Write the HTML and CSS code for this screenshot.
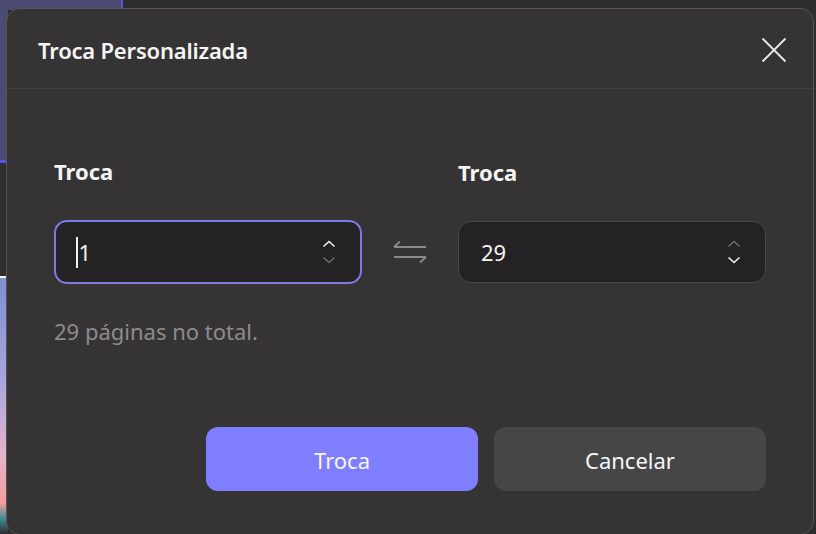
FILE: index.html
```html
<!DOCTYPE html>
<html lang="pt">
<head>
  <meta charset="UTF-8">
  <meta name="viewport" content="width=device-width, initial-scale=1.0">
  <title>Troca Personalizada</title>
  <link rel="stylesheet" href="styles.css">
</head>
<body>
  <!-- App behind the modal -->
  <div class="backdrop">
    <div class="backdrop-top">
      <div class="tab-active"></div>
      <div class="tab-rest"></div>
    </div>
    <div class="backdrop-side">
      <div class="side-top"></div>
      <div class="side-line"></div>
      <div class="side-dark"></div>
      <div class="side-thumb"></div>
    </div>
  </div>

  <!-- Dialog -->
  <div class="dialog">
    <div class="dialog-header">
      <h2>Troca Personalizada</h2>
      <button class="close" aria-label="Fechar">
        <svg width="26" height="26" viewBox="0 0 26 26">
          <path d="M1.5 1.5 L24.5 24.5 M24.5 1.5 L1.5 24.5" stroke="#ececec" stroke-width="1.8" fill="none"/>
        </svg>
      </button>
    </div>

    <div class="dialog-body">
      <div class="fields">
        <div class="field">
          <label>Troca</label>
          <div class="spin focused">
            <span class="value"><span class="caret"></span>1</span>
            <span class="arrows">
              <svg width="14" height="26" viewBox="0 0 14 26">
                <path d="M1.5 7.5 L7 2.5 L12.5 7.5" stroke="#f2f2f2" stroke-width="1.6" fill="none"/>
                <path d="M1.5 18.5 L7 23.5 L12.5 18.5" stroke="#6a6869" stroke-width="1.6" fill="none"/>
              </svg>
            </span>
          </div>
        </div>

        <div class="swap">
          <svg width="36" height="24" viewBox="0 0 36 24">
            <path d="M2 7 H34 M2 7 L8 1.5 M34 17 H2 M34 17 L28 22.5" stroke="#8b898a" stroke-width="1.8" fill="none"/>
          </svg>
        </div>

        <div class="field">
          <label>Troca</label>
          <div class="spin">
            <span class="value">29</span>
            <span class="arrows">
              <svg width="14" height="26" viewBox="0 0 14 26">
                <path d="M1.5 7.5 L7 2.5 L12.5 7.5" stroke="#6a6869" stroke-width="1.6" fill="none"/>
                <path d="M1.5 18.5 L7 23.5 L12.5 18.5" stroke="#f2f2f2" stroke-width="1.6" fill="none"/>
              </svg>
            </span>
          </div>
        </div>
      </div>

      <p class="note">29 páginas no total.</p>

      <div class="actions">
        <button class="btn primary">Troca</button>
        <button class="btn">Cancelar</button>
      </div>
    </div>
  </div>
</body>
</html>
```

FILE: styles.css
```css
html, body {
  margin: 0;
  height: 100%;
}
body {
  font-family: "Noto Sans", "Open Sans", sans-serif;
  background: #2e2d2e;
  overflow: hidden;
  position: relative;
}

/* app behind the modal */
.backdrop {
  height: 100%;
  display: flex;
  flex-direction: column;
}
.backdrop-top {
  display: flex;
  height: 10px;
}
.tab-active {
  width: 121px;
  background: #4b4a72;
  border-right: 2px solid #5a55e6;
}
.tab-rest {
  flex: 1;
  background: #2e2d2e;
}
.backdrop-side {
  width: 8px;
  flex: 1;
  display: flex;
  flex-direction: column;
}
.side-top {
  height: 150px;
  background: #4b4a72;
}
.side-line {
  height: 3px;
  background: #5a55e6;
}
.side-dark {
  height: 113px;
  background: #2f2e2f;
  border-bottom: 2px solid #f4f4f4;
}
.side-thumb {
  flex: 1;
  background: linear-gradient(#7f8fd2, #a7a6dd 40%, #e7b4cc 70%, #f39c9c 88%, #3f8c95 94%, #2e2d2e);
}

/* dialog */
.dialog {
  position: absolute;
  left: 6px;
  top: 8px;
  width: 806px;
  height: 525px;
  background: #353334;
  border: 1px solid #555354;
  border-radius: 14px;
  color: #f4f4f4;
  overflow: hidden;
}
.dialog-header {
  height: 80px;
  display: flex;
  align-items: center;
  justify-content: space-between;
  padding: 2px 26px 0 31px;
  box-sizing: border-box;
  border-bottom: 1px solid #414041;
}
.dialog-header h2 {
  margin: 0;
  font-size: 22px;
  font-weight: 600;
  letter-spacing: -0.2px;
}
.close {
  background: none;
  border: none;
  padding: 0;
  width: 26px;
  height: 26px;
  cursor: pointer;
}

.dialog-body {
  padding: 0 47px 0 47px;
}
.fields {
  display: flex;
  align-items: flex-end;
  margin-top: 67px;
}
.field {
  width: 308px;
  display: flex;
  flex-direction: column;
}
.field label {
  font-size: 22px;
  font-weight: 700;
  line-height: 30px;
  margin-bottom: 34px;
}
.spin {
  height: 62px;
  box-sizing: border-box;
  border: 1px solid #4a4849;
  border-radius: 13px;
  background: #242224;
  display: flex;
  align-items: center;
  justify-content: space-between;
  padding: 0 24px 0 22px;
  font-size: 22px;
}
.spin.focused {
  height: 64px;
  border: 2px solid #7c7ce0;
  margin-bottom: -1px;
  padding-left: 20px;
}
.value {
  display: flex;
  align-items: center;
}
.caret {
  width: 1.5px;
  height: 31px;
  background: #f0f0f0;
  margin-right: 1px;
}
.arrows {
  display: flex;
}
.swap {
  flex: 1;
  height: 62px;
  display: flex;
  align-items: center;
  justify-content: center;
}

.note {
  margin: 32px 0 0;
  font-size: 22px;
  line-height: 32px;
  color: #8d8b8c;
}

.actions {
  display: flex;
  justify-content: flex-end;
  gap: 16px;
  margin-top: 80px;
}
.btn {
  width: 272px;
  height: 64px;
  border: none;
  border-radius: 12px;
  background: #474647;
  color: #f6f6f6;
  font-family: inherit;
  font-size: 22px;
  padding: 2px 0 0;
}
.btn.primary {
  background: #7e7eff;
}
```
